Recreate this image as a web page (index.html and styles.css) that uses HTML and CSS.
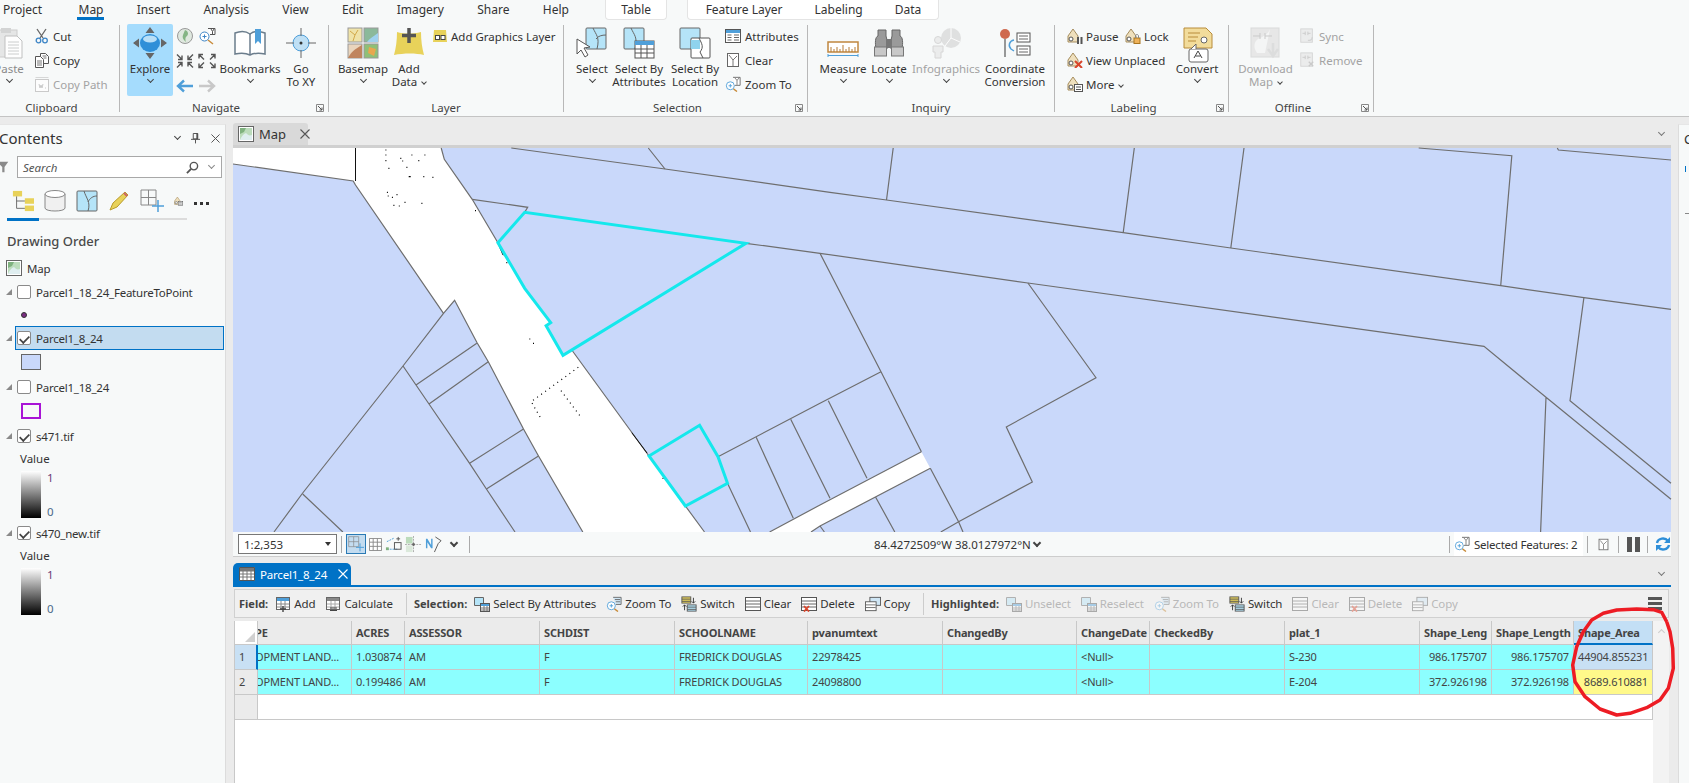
FILE: index.html
```html
<!DOCTYPE html>
<html lang="en">
<head>
<meta charset="utf-8">
<title>ArcGIS Pro</title>
<link rel="stylesheet" href="styles.css">
</head>
<body>
<svg class="sprite" xmlns="http://www.w3.org/2000/svg">
<symbol id="paste" viewBox="0 0 32 32"><rect x="2" y="3" width="22" height="27" fill="#e4e4e4" stroke="#c8c8c8"/><rect x="8" y="1" width="10" height="5" fill="#d0d0d0"/><path d="M12 9h12l5 5v17H12z" fill="#fff" stroke="#bbb"/><path d="M15 15h11M15 18h11M15 21h11M15 24h11M15 27h11" stroke="#c8c8c8"/></symbol>
<symbol id="cut" viewBox="0 0 16 16"><path d="M3 1l6 9M12 1L6 10" stroke="#666" stroke-width="1.300" fill="none"/><circle cx="4.500" cy="12.500" r="2.300" fill="none" stroke="#3d85c6" stroke-width="1.300"/><circle cx="11" cy="12.500" r="2.300" fill="none" stroke="#3d85c6" stroke-width="1.300"/></symbol>
<symbol id="copy" viewBox="0 0 16 16"><path d="M6.500 1.500h5l3 3v7h-8z" fill="#fff" stroke="#555"/><path d="M1.500 4.500h5l3 3v8h-8z" fill="#fff" stroke="#555"/><path d="M3 9h5M3 11h5M3 13h5M8.500 4h4M9.500 6h3" stroke="#777"/></symbol>
<symbol id="copypath" viewBox="0 0 16 16"><rect x="1.500" y="3.500" width="13" height="12" fill="#fff" stroke="#bbb"/><path d="M1.500 1.500h13" stroke="#ccc"/><path d="M5 8l1 4 1-3 1 3 1-4M11 12h1" stroke="#bbb" fill="none"/></symbol>
<symbol id="explore" viewBox="0 0 36 34"><path d="M18 1l-4.500 6h9zM18 33l-4.500-6h9zM1 17l6-4.500v9zM35 17l-6-4.500v9z" fill="#666"/><ellipse cx="18" cy="17" rx="10" ry="9" fill="#2f8fd8"/><ellipse cx="18" cy="13" rx="7" ry="3.500" fill="#b9dff7"/></symbol>
<symbol id="globe" viewBox="0 0 18 18"><circle cx="9" cy="9" r="7.500" fill="#dfe8df" stroke="#999"/><path d="M9 3c3 1 4 4 2 6-2 1-2 4-1 6-3-2-4-5-3-7z" fill="#85b585"/></symbol>
<symbol id="zoomsel" viewBox="0 0 18 18"><circle cx="6.500" cy="9.500" r="4.500" fill="#fff" stroke="#3d85c6"/><path d="M4.500 9.500h4M6.500 7.500v4" stroke="#3d85c6"/><path d="M10 13l5 4" stroke="#c88b3a" stroke-width="1.500"/><path d="M10 1.500h7v6h-5" fill="#fff" stroke="#555"/><path d="M13 2l1.500 2.500L16 2M14.500 4.500V7" stroke="#555" fill="none"/></symbol>
<symbol id="zin" viewBox="0 0 18 15"><path d="M1 1l5 5M6 2v4H2M17 1l-5 5M12 2v4h4M1 14l5-5M6 13V9H2M17 14l-5-5M12 13V9h4" stroke="#555" stroke-width="1.400" fill="none"/></symbol>
<symbol id="zout" viewBox="0 0 18 15"><path d="M6 6L1 1M1 5V1h4M12 6l5-5M17 5V1h-4M6 9l-5 5M1 10v4h4M12 9l5 5M17 10v4h-4" stroke="#555" stroke-width="1.400" fill="none"/></symbol>
<symbol id="back" viewBox="0 0 18 14"><path d="M17 7H3M8 1.500L2 7l6 5.500" stroke="#4f9fd9" stroke-width="2.400" fill="none"/></symbol>
<symbol id="fwd" viewBox="0 0 18 14"><path d="M1 7h14M10 1.500L16 7l-6 5.500" stroke="#c8c8c8" stroke-width="2.400" fill="none"/></symbol>
<symbol id="book" viewBox="0 0 32 30"><path d="M1 5c5-2 11-2 15 1 4-3 10-3 15-1v21c-5-1-11-1-15 1-4-2-10-2-15-1z" fill="#fff" stroke="#6b7d8c" stroke-width="1.500"/><path d="M16 6v21" stroke="#6b7d8c" stroke-width="1.500"/><path d="M21 1h6v15l-3-3-3 3z" fill="#4f9fd9"/></symbol>
<symbol id="goto" viewBox="0 0 32 32"><circle cx="16" cy="16" r="8" fill="#bfe0f5" stroke="#4f9fd9"/><circle cx="16" cy="16" r="1.500" fill="#333"/><path d="M16 1v8M16 23v8M1 16h8M23 16h8" stroke="#666"/></symbol>
<symbol id="basemap" viewBox="0 0 32 32"><rect x="1" y="1" width="14" height="14" fill="#efe3a8" stroke="#999"/><path d="M3 4l5 4 3-5M8 8l-2 6" stroke="#d2a94a" fill="none"/><rect x="17" y="1" width="14" height="14" fill="#8bb99a" stroke="#999"/><path d="M20 15c3-4 6-5 11-9v9z" fill="#9fd1ee"/><rect x="1" y="17" width="14" height="14" fill="#e9d5bd" stroke="#999"/><path d="M1 31c3-6 7-9 14-13v13z" fill="#c0845d"/><rect x="17" y="17" width="14" height="14" fill="#8fbf77" stroke="#999"/><path d="M22 20l7 2-2 7-6-3z" fill="#e8a74f"/></symbol>
<symbol id="adddata" viewBox="0 0 32 32"><path d="M4 5c7 2 16 2 24 0 0 8 1 16 3 23-8-2-20-2-30 0 2-7 3-15 3-23z" fill="#e8d25a"/><path d="M16 1v15M9 8.500h14" stroke="#555" stroke-width="3.500"/></symbol>
<symbol id="gfx" viewBox="0 0 16 16"><path d="M2 2h12l1 12H1z" fill="#e8d25a"/><rect x="3.500" y="7.500" width="4" height="4" fill="#fff" stroke="#444"/><rect x="9" y="7.500" width="4" height="4" fill="#fff" stroke="#444"/></symbol>
<symbol id="select" viewBox="0 0 32 32"><rect x="10" y="1" width="20" height="21" rx="1" fill="#b5e4f8" stroke="#666"/><path d="M17 1c3 7 7 9 4 21M30 8c-4 0-8 1-10 4" stroke="#666" fill="none"/><path d="M1 12l13 8-6 1 4 7-3 2-4-7-4 4z" fill="#fff" stroke="#555"/></symbol>
<symbol id="sbattr" viewBox="0 0 32 32"><rect x="1" y="1" width="20" height="21" rx="1" fill="#b5e4f8" stroke="#666"/><path d="M8 1c3 7 7 9 4 21" stroke="#666" fill="none"/><rect x="12" y="14" width="19" height="17" fill="#fff" stroke="#555"/><rect x="12" y="14" width="19" height="4" fill="#4f9fd9"/><path d="M12 22h19M12 26h19M18 18v13M24 18v13" stroke="#555"/></symbol>
<symbol id="sbloc" viewBox="0 0 32 32"><rect x="1" y="1" width="20" height="21" rx="1" fill="#b5e4f8" stroke="#666"/><rect x="12" y="11" width="19" height="20" rx="1" fill="#fff" stroke="#555"/><path d="M12 13h9v9h-9z" fill="#8fd3ee"/><path d="M20 11c3 6 5 9 1 14l3 6" stroke="#555" fill="none"/></symbol>
<symbol id="attr" viewBox="0 0 16 14"><rect x=".5" y=".5" width="15" height="13" fill="#fff" stroke="#555"/><rect x="1" y="1" width="14" height="3" fill="#4f9fd9"/><path d="M2.500 6h4M2.500 8.500h4M2.500 11h4M9 6h5M9 8.500h5M9 11h5" stroke="#666"/></symbol>
<symbol id="clear" viewBox="0 0 16 16"><rect x="2.500" y="1.500" width="11" height="13" fill="#fff" stroke="#666"/><path d="M4 3l4 5 4-4M8 8v6" stroke="#777" fill="none"/></symbol>
<symbol id="zoomto" viewBox="0 0 18 18"><circle cx="6" cy="11" r="4.500" fill="#fff" stroke="#4f9fd9"/><path d="M4 11h4M6 9v4" stroke="#4f9fd9"/><path d="M9.500 14.500l4 3" stroke="#c88b3a" stroke-width="1.500"/><path d="M9 1.500h8v9H11" fill="#fff" stroke="#666"/><path d="M11 2l2.500 3L16 2M13.500 5v5" stroke="#777" fill="none"/></symbol>
<symbol id="measure" viewBox="0 0 32 32"><rect x="1" y="15" width="30" height="10" fill="#fff" stroke="#c0873f" stroke-width="1.500"/><path d="M4 25v-5M7 25v-3M10 25v-5M13 25v-3M16 25v-7M19 25v-3M22 25v-5M25 25v-3M28 25v-5" stroke="#b57b34"/><path d="M1 28.500h30M1 27v3M31 27v3" stroke="#4f9fd9"/></symbol>
<symbol id="binoc" viewBox="0 0 32 32"><path d="M5 3h8v6l1 4v9H3C2 16 2 10 5 9zM19 3h8v6c3 1 3 7 2 13H18v-9l1-4z" fill="#9a9a9a" stroke="#666"/><path d="M13 12h6v9h-6z" fill="#777"/><rect x="1.500" y="20" width="12" height="9" fill="#c8c8c8" stroke="#777"/><rect x="18.500" y="20" width="12" height="9" fill="#c8c8c8" stroke="#777"/></symbol>
<symbol id="info" viewBox="0 0 32 32"><circle cx="21" cy="11" r="10" fill="#d8d8d8"/><path d="M21 11V1M21 11l9 4M21 11l-6 8" stroke="#fff"/><circle cx="8" cy="13" r="3.500" fill="#e8e8e8" stroke="#ccc"/><path d="M3 19h10v6h-2v6H5v-6H3z" fill="#e8e8e8" stroke="#ccc"/></symbol>
<symbol id="coord" viewBox="0 0 32 32"><circle cx="6" cy="7" r="5" fill="#cf6a4f"/><path d="M6 12v18" stroke="#777" stroke-width="1.500"/><rect x="18" y="6" width="13" height="9" fill="#fff" stroke="#555"/><rect x="18" y="19" width="13" height="9" fill="#fff" stroke="#555"/><path d="M20 9h9M20 12h9M20 22h9M20 25h9" stroke="#666"/><path d="M15 13c-5 1-6 6-3 9l3 2" stroke="#4f9fd9" stroke-width="1.500" fill="none"/></symbol>
<symbol id="lblpause" viewBox="0 0 16 16"><path d="M1 8l5-7 5 7v6H1z" fill="#efe0bd" stroke="#a58d5e"/><circle cx="4" cy="11" r="2" fill="#fff" stroke="#555"/><path d="M10 9h2v7h-2zM13.500 9h2v7h-2z" fill="#555"/></symbol>
<symbol id="lbllock" viewBox="0 0 16 16"><path d="M1 8l5-7 5 7v6H1z" fill="#efe0bd" stroke="#a58d5e"/><circle cx="4" cy="11" r="2" fill="#fff" stroke="#555"/><rect x="9" y="10" width="6" height="5.500" fill="#eeb25a" stroke="#a8741f"/><path d="M10.500 10V8c0-2 3-2 3 0v2" fill="none" stroke="#888"/></symbol>
<symbol id="lblx" viewBox="0 0 16 16"><path d="M1 8l5-7 5 7v6H1z" fill="#efe0bd" stroke="#a58d5e"/><circle cx="4" cy="11" r="2" fill="#fff" stroke="#555"/><path d="M8 9l7 7M15 9l-7 7" stroke="#d9452b" stroke-width="2"/></symbol>
<symbol id="lblmore" viewBox="0 0 16 16"><path d="M1 8l5-7 5 7v6H1z" fill="#efe0bd" stroke="#a58d5e"/><circle cx="4" cy="11" r="2" fill="#fff" stroke="#555"/><rect x="7.500" y="8.500" width="8" height="7" fill="#fff" stroke="#555"/><path d="M9 11h5M9 13.500h5" stroke="#555"/></symbol>
<symbol id="convert" viewBox="0 0 32 36"><path d="M3 1h22l6 6v14H3z" fill="#f2dc9b" stroke="#b88c3a"/><path d="M7 6h12M7 10h10M7 14h8" stroke="#b88c3a"/><circle cx="23" cy="13" r="3" fill="#fff" stroke="#666"/><rect x="8" y="22" width="19" height="13" rx="2" fill="#fff" stroke="#666"/><path d="M13 31l4-7 4 7M14.500 29h5" stroke="#444" fill="none"/><path d="M10 22l5-5v5" fill="#fff" stroke="#666"/></symbol>
<symbol id="dlmap" viewBox="0 0 32 32"><rect x="1" y="1" width="28" height="29" fill="#e2e2e2" stroke="#d0d0d0"/><path d="M20 2c-2 6-8 8-12 10-4 3-5 8-1 14h8" fill="#f4f4f4"/><path d="M3 9h7M15 9h7M10 6v6M15 6v6" stroke="#bbb"/><path d="M23 16v12M18 22l5 7 5-7" stroke="#d4d4d4" stroke-width="2.500" fill="none"/></symbol>
<symbol id="sync" viewBox="0 0 16 18"><rect x="1" y="1" width="13" height="15" fill="#e8e8e8" stroke="#c8c8c8"/><path d="M3 6h3M9 6h3M6 4v4M9 4v4" stroke="#bbb"/><path d="M9 14c3 0 5-1 5-4" stroke="#c8c8c8" stroke-width="1.500" fill="none"/></symbol>
<symbol id="remove" viewBox="0 0 16 18"><rect x="1" y="1" width="13" height="15" fill="#e8e8e8" stroke="#c8c8c8"/><path d="M3 6h3M9 6h3M6 4v4M9 4v4" stroke="#bbb"/><path d="M10 11l5 5M15 11l-5 5" stroke="#bbb" stroke-width="1.500"/></symbol>
<symbol id="launch" viewBox="0 0 8 8"><path d="M.5.500h7v7h-7z" fill="none" stroke="#888"/><path d="M2 2l4 4M6 3.500V6H3.500" stroke="#555" fill="none"/></symbol>
<symbol id="mapi" viewBox="0 0 16 16"><rect x=".5" y=".5" width="15" height="15" fill="#fff" stroke="#666"/><path d="M2 2h12v12H2z" fill="#bcdcbc"/><path d="M2 14c2-4 3-6 6-7 2 2 3 3 6 2v5z" fill="#dfeef0"/><path d="M2 2h6l-2 4-4 2z" fill="#7fb27f"/></symbol>
<symbol id="tree" viewBox="0 0 24 22"><rect x="1" y="0" width="10" height="6" fill="#e8d25a"/><rect x="14" y="8" width="10" height="6" fill="#e8d25a"/><rect x="14" y="16" width="10" height="6" fill="#e8d25a"/><path d="M5 6v13h9M5 11h9" stroke="#666" fill="none"/></symbol>
<symbol id="cyl" viewBox="0 0 22 22"><path d="M1 4v14c0 4 20 4 20 0V4" fill="#f0f0f0" stroke="#888"/><ellipse cx="11" cy="4" rx="10" ry="3.500" fill="#fff" stroke="#888"/></symbol>
<symbol id="mapt" viewBox="0 0 22 22"><rect x="1" y="1" width="20" height="20" rx="1" fill="#b5e4f8" stroke="#666"/><path d="M8 1c2 7 7 11 4 20M21 6c-4 0-7 2-9 6" stroke="#666" fill="none"/></symbol>
<symbol id="pencil" viewBox="0 0 22 22"><path d="M2 20l3-7L17 2l3 3L9 17z" fill="#e8d25a" stroke="#b99b2a"/><path d="M16 3l3 3" stroke="#c66" stroke-width="2"/></symbol>
<symbol id="gridplus" viewBox="0 0 24 24"><path d="M1 1h15v15H1zM8.500 1v15M1 8.500h15" fill="none" stroke="#888"/><path d="M18 11v12M12 17h12" stroke="#4f9fd9" stroke-width="1.500"/></symbol>
<symbol id="grid9" viewBox="0 0 14 14"><path d="M.5.500h13v13H.5zM.5 4.500h13M.5 9h13M4.500.500v13M9 .5v13" fill="#fff" stroke="#888"/></symbol>
<symbol id="tbl" viewBox="0 0 16 14"><path d="M.5.500h15v13H.5z" fill="#fff" stroke="#555"/><path d="M1 4h14M1 7h14M1 10h14M4 4v9M8 4v9M12 4v9" stroke="#777"/><rect x="1" y="1" width="14" height="3" fill="#777"/></symbol>
<symbol id="addf" viewBox="0 0 16 16"><rect x="1.500" y="1.500" width="13" height="12" fill="#fff" stroke="#666"/><rect x="2" y="2" width="12" height="3" fill="#4f9fd9"/><path d="M2 8h12M2 11h12M6 5v8M10 5v8" stroke="#888"/><path d="M8 10v6M5 13h6" stroke="#444" stroke-width="1.400"/></symbol>
<symbol id="calcf" viewBox="0 0 16 16"><rect x="1.500" y="1.500" width="13" height="12" fill="#fff" stroke="#666"/><rect x="2" y="2" width="12" height="3" fill="#888"/><path d="M2 8h12M2 11h12M6 5v8M10 5v8" stroke="#aaa"/><path d="M5 12h7M5 14.500h7" stroke="#444" stroke-width="1.200"/></symbol>
<symbol id="tsba" viewBox="0 0 16 16"><path d="M.5 1.500h9v8h-9z" fill="#b5e4f8" stroke="#666"/><rect x="6.500" y="7.500" width="9" height="8" fill="#fff" stroke="#555"/><rect x="7" y="8" width="8" height="2" fill="#4f9fd9"/><path d="M7 12h8M7 14h8M10 10v5M13 10v5" stroke="#777"/></symbol>
<symbol id="tzoom" viewBox="0 0 18 18"><circle cx="6" cy="11" r="4.500" fill="#fff" stroke="#4f9fd9"/><path d="M4 11h4M6 9v4" stroke="#4f9fd9"/><path d="M9.500 14.500l4 3" stroke="#c88b3a" stroke-width="1.500"/><path d="M8 1.500h9v8H11" fill="#cfe6f5" stroke="#666"/><path d="M10 4h6M11 6.500h5" stroke="#666"/></symbol>
<symbol id="tswitch" viewBox="0 0 18 18"><rect x="1" y="1" width="10" height="7" fill="#e8d25a" stroke="#555"/><path d="M1 3.500h10M1 6h10" stroke="#555"/><rect x="7" y="10" width="10" height="7" fill="#b5e4f8" stroke="#555"/><path d="M7 12.500h10M7 15h10" stroke="#555"/><path d="M14 2v6M12 6l2 2 2-2M4 16v-6M2 12l2-2 2 2" stroke="#333" fill="none"/></symbol>
<symbol id="tclear" viewBox="0 0 16 16"><rect x=".5" y="1.500" width="15" height="13" fill="#fff" stroke="#555"/><path d="M1 5h14M1 8h14M1 11h14" stroke="#666"/></symbol>
<symbol id="tdel" viewBox="0 0 16 16"><rect x=".5" y="1.500" width="15" height="13" fill="#fff" stroke="#555"/><path d="M1 5h14M1 8h14M1 11h14" stroke="#666"/><path d="M3 10l5 5.500M8 10l-5 5.500" stroke="#d9452b" stroke-width="1.800"/></symbol>
<symbol id="tcopy" viewBox="0 0 18 16"><rect x="5.500" y=".5" width="12" height="9" fill="#cfe6f5" stroke="#555"/><rect x=".5" y="5.500" width="12" height="10" fill="#fff" stroke="#555"/><path d="M1 9h11M1 12h11" stroke="#666"/></symbol>
<symbol id="snap" viewBox="0 0 18 18"><path d="M2 6l8-4M2 14h12" stroke="#4f9fd9" stroke-dasharray="2 1"/><rect x="1" y="12" width="3" height="3" fill="#7fb27f"/><rect x="10" y="7" width="7" height="7" fill="none" stroke="#555"/><path d="M14 1v4M12 3h4" stroke="#555"/></symbol>
<symbol id="correct" viewBox="0 0 18 18"><rect x="1" y="1" width="7" height="7" fill="#bcdcbc"/><rect x="1" y="10" width="7" height="7" fill="#dbe9db"/><path d="M0 9h18M9 0v18" stroke="#aaa" stroke-dasharray="2 1"/><circle cx="9" cy="9" r="1.500" fill="#666"/></symbol>
<symbol id="north" viewBox="0 0 18 18"><path d="M1 13V3h1.500l4 6.500V3H8v10H6.500l-4-6.500V13z" fill="#4f9fd9"/><path d="M11 1l6 4-3 3M14 8l-4 9" stroke="#555" fill="none"/></symbol>
<symbol id="mag" viewBox="0 0 14 14"><circle cx="8.500" cy="5.500" r="4" fill="none" stroke="#555" stroke-width="1.500"/><path d="M5.500 8.500L1 13" stroke="#555" stroke-width="2"/></symbol>
<symbol id="refresh" viewBox="0 0 16 16"><path d="M2 7c1-5 8-6 11-2M14 9c-1 5-8 6-11 2" stroke="#2f8fd8" stroke-width="2.400" fill="none"/><path d="M15 1v6h-6zM1 15V9h6z" fill="#2f8fd8"/></symbol>
<symbol id="filter" viewBox="0 0 12 16"><path d="M-4 1h15L6 8v7H3V8z" fill="#8a8a8a"/></symbol>
<symbol id="pin" viewBox="0 0 10 12"><path d="M2.500 1h5v6h-5zM0 7.500h10M5 8v4" stroke="#444" fill="none"/><path d="M6 1h1.500v6H6z" fill="#444"/></symbol>
<symbol id="xmark" viewBox="0 0 10 10"><path d="M.5.500l9 9M9.500.500l-9 9" stroke="currentColor" stroke-width="1.100" fill="none"/></symbol>
</svg>

<header class="tabs">
  <span class="tab first">Project</span>
  <span class="tab active">Map</span>
  <span class="tab">Insert</span>
  <span class="tab">Analysis</span>
  <span class="tab">View</span>
  <span class="tab">Edit</span>
  <span class="tab">Imagery</span>
  <span class="tab">Share</span>
  <span class="tab">Help</span>
  <div class="ctx ctx-table"><span class="tab">Table</span></div>
  <div class="ctx ctx-layer"><span class="tab">Feature Layer</span><span class="tab">Labeling</span><span class="tab">Data</span></div>
</header>

<section class="ribbon">
  <div class="group g-clip">
    <div class="gbody">
      <div class="lg w50 dim"><svg class="i32"><use href="#paste"/></svg><span>Paste</span><i class="chev"></i></div>
      <div class="smalls">
        <div class="sm"><svg class="i16"><use href="#cut"/></svg><span>Cut</span></div>
        <div class="sm"><svg class="i16"><use href="#copy"/></svg><span>Copy</span></div>
        <div class="sm off"><svg class="i16"><use href="#copypath"/></svg><span>Copy Path</span></div>
      </div>
    </div>
    <div class="gfoot"><span>Clipboard</span></div>
  </div>
  <div class="group g-nav">
    <div class="gbody">
      <div class="lg explore"><svg class="i36"><use href="#explore"/></svg><span>Explore</span><i class="chev"></i></div>
      <div class="navgrid">
        <svg class="nv"><use href="#globe"/></svg><svg class="nv"><use href="#zoomsel"/></svg>
        <svg class="nv"><use href="#zin"/></svg><svg class="nv"><use href="#zout"/></svg>
        <svg class="nv"><use href="#back"/></svg><svg class="nv"><use href="#fwd"/></svg>
      </div>
      <div class="lg w66 ml2"><svg class="i32"><use href="#book"/></svg><span>Bookmarks</span><i class="chev"></i></div>
      <div class="lg w38"><svg class="i32"><use href="#goto"/></svg><span>Go<br>To XY</span></div>
    </div>
    <div class="gfoot launcher"><span>Navigate</span><svg class="i8"><use href="#launch"/></svg></div>
  </div>
  <div class="group g-layer">
    <div class="gbody">
      <div class="lg w52"><svg class="i32"><use href="#basemap"/></svg><span>Basemap</span><i class="chev"></i></div>
      <div class="lg w40"><svg class="i32"><use href="#adddata"/></svg><span>Add<br>Data <i class="chev inl"></i></span></div>
      <div class="smalls ml3">
        <div class="sm"><svg class="i16"><use href="#gfx"/></svg><span>Add Graphics Layer</span></div>
      </div>
    </div>
    <div class="gfoot"><span>Layer</span></div>
  </div>
  <div class="group g-sel">
    <div class="gbody">
      <div class="lg w48"><svg class="i32"><use href="#select"/></svg><span>Select</span><i class="chev"></i></div>
      <div class="lg w46"><svg class="i32"><use href="#sbattr"/></svg><span>Select By<br>Attributes</span></div>
      <div class="lg w46 ml10"><svg class="i32"><use href="#sbloc"/></svg><span>Select By<br>Location</span></div>
      <div class="smalls ml7 wide">
        <div class="sm"><svg class="i16"><use href="#attr"/></svg><span>Attributes</span></div>
        <div class="sm"><svg class="i16"><use href="#clear"/></svg><span>Clear</span></div>
        <div class="sm"><svg class="i16"><use href="#zoomto"/></svg><span>Zoom To</span></div>
      </div>
    </div>
    <div class="gfoot launcher"><span>Selection</span><svg class="i8"><use href="#launch"/></svg></div>
  </div>
  <div class="group g-inq">
    <div class="gbody">
      <div class="lg w56"><svg class="i32"><use href="#measure"/></svg><span>Measure</span><i class="chev"></i></div>
      <div class="lg w36"><svg class="i32"><use href="#binoc"/></svg><span>Locate</span><i class="chev"></i></div>
      <div class="lg w78 off"><svg class="i32"><use href="#info"/></svg><span>Infographics</span><i class="chev"></i></div>
      <div class="lg w60"><svg class="i32"><use href="#coord"/></svg><span>Coordinate<br>Conversion</span></div>
    </div>
    <div class="gfoot"><span>Inquiry</span></div>
  </div>
  <div class="group g-lab">
    <div class="gbody">
      <div class="smalls w113">
        <div class="sm"><div class="pair"><svg class="i16"><use href="#lblpause"/></svg><span>Pause</span></div><div class="pair"><svg class="i16"><use href="#lbllock"/></svg><span>Lock</span></div></div>
        <div class="sm"><svg class="i16"><use href="#lblx"/></svg><span>View Unplaced</span></div>
        <div class="sm"><svg class="i16"><use href="#lblmore"/></svg><span>More <i class="chev inl"></i></span></div>
      </div>
      <div class="lg w34"><svg class="i32 tall"><use href="#convert"/></svg><span>Convert</span><i class="chev"></i></div>
    </div>
    <div class="gfoot launcher"><span>Labeling</span><svg class="i8"><use href="#launch"/></svg></div>
  </div>
  <div class="group g-off">
    <div class="gbody">
      <div class="lg w57 off"><svg class="i32"><use href="#dlmap"/></svg><span>Download<br>Map <i class="chev inl"></i></span></div>
      <div class="smalls ml5 wide off">
        <div class="sm"><svg class="i16"><use href="#sync"/></svg><span>Sync</span></div>
        <div class="sm"><svg class="i16"><use href="#remove"/></svg><span>Remove</span></div>
      </div>
    </div>
    <div class="gfoot launcher"><span>Offline</span><svg class="i8"><use href="#launch"/></svg></div>
  </div>
</section>

<main class="main">
  <aside class="contents">
    <div class="ct-head">
      <span class="ct-title">Contents</span>
      <i class="chev hd"></i>
      <svg class="pin"><use href="#pin"/></svg>
      <svg class="ct-x"><use href="#xmark"/></svg>
    </div>
    <div class="ct-search">
      <svg class="filter"><use href="#filter"/></svg>
      <div class="searchbox"><span>Search</span><svg class="mag"><use href="#mag"/></svg><i class="chev"></i></div>
    </div>
    <div class="ct-icons">
      <svg class="ic24"><use href="#tree"/></svg>
      <svg class="ic24"><use href="#cyl"/></svg>
      <svg class="ic24"><use href="#mapt"/></svg>
      <svg class="ic24"><use href="#pencil"/></svg>
      <svg class="ic24 big"><use href="#gridplus"/></svg>
      <svg class="ic-cut"><use href="#lblmore"/></svg>
      <div class="dots"><b></b><b></b><b></b></div>
    </div>
    <div class="ct-line"><i></i></div>
    <h2 class="ct-h">Drawing Order</h2>
    <div class="row row-map"><svg class="i16"><use href="#mapi"/></svg><span>Map</span></div>
    <div class="row"><b class="tri"></b><b class="cb"></b><span>Parcel1_18_24_FeatureToPoint</span></div>
    <div class="sw-row short"><b class="dot"></b></div>
    <div class="row sel"><b class="tri"></b><b class="cb on"></b><span>Parcel1_8_24</span></div>
    <div class="sw-row"><b class="sw fill"></b></div>
    <div class="row"><b class="tri"></b><b class="cb"></b><span>Parcel1_18_24</span></div>
    <div class="sw-row"><b class="sw hollow"></b></div>
    <div class="row"><b class="tri"></b><b class="cb on"></b><span>s471.tif</span></div>
    <div class="val">Value</div>
    <div class="ramp"><b class="grad"></b><div class="ramp-lab"><span>1</span><span>0</span></div></div>
    <div class="row"><b class="tri"></b><b class="cb on"></b><span>s470_new.tif</span></div>
    <div class="val">Value</div>
    <div class="ramp"><b class="grad"></b><div class="ramp-lab"><span>1</span><span>0</span></div></div>
  </aside>

  <div class="center">
    <div class="strip">
      <div class="maptab"><svg class="i16"><use href="#mapi"/></svg><span>Map</span><svg class="mx"><use href="#xmark"/></svg></div>
      <i class="chev strip-chev"></i>
    </div>
    <div class="mapview">
      <svg class="mapsvg" viewBox="233 148 1438 384" xmlns="http://www.w3.org/2000/svg">
        <rect x="233" y="148" width="1438" height="384" fill="#c9d8fa"/>
        <path d="M441.200 148L444.300 159.300 472.200 199.300 497.900 242.700 524.700 288.300 550.700 322.700 546.100 325.700 563 355.300 572.500 351 649 456 685.400 506 704.500 532H582.800L538.500 456 523.500 429 488.300 361.700 476.800 342.300 454.600 300.300 443.500 313.300 355.500 185 353.200 181 233 164V148z" fill="#fff"/>
        <path d="M921.400 451.700L930.300 468.300 820 526 811 532H769.600L820 505z" fill="#fff"/>
        <g class="ml">
          <path d="M233 164L353.200 181 355.500 185 443.500 313.300"/>
          <path d="M441.200 148L444.300 159.300 472.200 199.300 497.900 242.700"/>
          <path d="M472.200 199.300L527.700 207.300 524.700 212.300"/>
          <path d="M572.500 351L649 456M685.400 506L704.500 532"/>
          <path d="M274 532L302.700 493 403 366 443.500 313.300 454.600 300.300 476.800 342.300 488.300 361.700 523.500 429 538.500 456 582.800 532"/>
          <path d="M403 366L416 385 429 404 469.600 463.300 486.400 489 515 532"/>
          <path d="M476.800 343.300L416 385M488.300 361.700L429 404M523.500 429L469.600 463.300M538.500 456L486.400 489M302.700 494L342.900 532"/>
          <path d="M511.300 148L665 169 830 192.300 886.500 200 1123.200 232.700 1230.800 248 1500.700 285.700 1583.900 297.700 1671 309.300"/>
          <path d="M648.300 148L665 169M893.200 148L886.500 200M1134.300 148L1123.200 232.700M1244 148L1230.800 248"/>
          <path d="M1418.700 148L1511.800 155.700 1500.700 285.700M1557.300 148L1558.400 150 1671 160"/>
          <path d="M1583.900 297.700L1570 400.700 1671 483.300"/>
          <path d="M745.900 243.300L820 253.300 1027.900 283 1484 346.300 1546 397.300 1671 499.300M1546 397.300L1540.600 532"/>
          <path d="M1027.900 283L1096 377.700 1006.300 427 1032.300 482 958.600 521.700 940.800 532"/>
          <path d="M820 253.300L881 371.700 921.400 451.700M930.300 468.300L958.600 521.700 963 532"/>
          <path d="M881 371.700L820 403.300 718 456.700M727.500 483.300L750.500 532"/>
          <path d="M756.200 437.300L793.300 518.300M828.300 400.700L867 478.300M790.700 419.300L830 498.300"/>
          <path d="M921.400 451.700L820 505 769.600 532M930.300 468.300L820 526 811 532M875.400 496.700L894.800 532M820 526L824.400 532"/>
        </g>
        <path class="blk" d="M355.500 148V181"/>
        <path class="blk" d="M631.800 432.700L647 453M497.900 243L503 255"/>
        <path class="spk" d="M385.400 150h1M385.400 155h1M385.400 160.700h1M400.300 158.300h1M402.200 161h1M411.400 155h1M418.300 160.700h1M424.400 155h1M388.400 168.300h1M406.400 167.300h1M408.700 176.700h2M423.300 176.700h1M432.400 177.300h1M386.900 192.300h1M387.700 196h1M391.900 197.300h1M396.500 194.700h1M393.400 205.300h1M398.800 206h1M404.500 202.300h1M421.400 203.300h1M475 210.700h1M501 250.700h1M503.600 255h1M506.300 262.700h1M529.300 339h1M533 343.300h1M662.500 478.300h1"/>
        <path class="dotted" d="M578.300 367.300L531.200 401.700 540.800 418.300M561 390.700L581.300 417.700"/>
        <path class="cy" d="M497.900 242.700L524.700 212.300 745.900 243.300 563 355.300 546.100 325.700 550.700 322.700 524.700 288.300z"/>
        <path class="cy" d="M649 456L699.600 425.300 718 456.700 727.500 483.300 685.400 506z"/>
      </svg>
    </div>
    <div class="status">
      <div class="scale"><span>1:2,353</span><b class="caret"></b></div>
      <i class="vs"></i>
      <div class="st-sel"><svg class="i16"><use href="#gridplus"/></svg></div>
      <svg class="st-i w13"><use href="#grid9"/></svg>
      <svg class="st-i"><use href="#snap"/></svg>
      <svg class="st-i"><use href="#correct"/></svg>
      <svg class="st-i"><use href="#north"/></svg>
      <i class="chev dark"></i>
      <i class="vs"></i>
      <div class="coords"><span>84.4272509°W 38.0127972°N</span><i class="chev dark tight"></i></div>
      <i class="vs"></i>
      <div class="selected"><svg class="i16"><use href="#zoomto"/></svg><span>Selected Features: 2</span></div>
      <i class="vs"></i>
      <svg class="st-i w13 st-clear"><use href="#clear"/></svg>
      <i class="vs"></i>
      <div class="pause"><b></b><b></b></div>
      <i class="vs"></i>
      <svg class="st-i st-ref"><use href="#refresh"/></svg>
    </div>
    <div class="strip strip2">
      <div class="tabletab"><svg class="i16"><use href="#tbl"/></svg><span>Parcel1_8_24</span><svg class="mx w"><use href="#xmark"/></svg></div>
      <i class="chev strip-chev"></i>
    </div>
    <div class="panel">
      <div class="toolbar">
        <b class="tl">Field:</b>
        <div class="tb"><svg class="i16"><use href="#addf"/></svg><span>Add</span></div>
        <div class="tb"><svg class="i16"><use href="#calcf"/></svg><span>Calculate</span></div>
        <i class="tsep"></i>
        <b class="tl">Selection:</b>
        <div class="tb"><svg class="i16"><use href="#tsba"/></svg><span>Select By Attributes</span></div>
        <div class="tb"><svg class="i16"><use href="#tzoom"/></svg><span>Zoom To</span></div>
        <div class="tb"><svg class="i16"><use href="#tswitch"/></svg><span>Switch</span></div>
        <div class="tb"><svg class="i16"><use href="#tclear"/></svg><span>Clear</span></div>
        <div class="tb"><svg class="i16"><use href="#tdel"/></svg><span>Delete</span></div>
        <div class="tb"><svg class="i16"><use href="#tcopy"/></svg><span>Copy</span></div>
        <i class="tsep"></i>
        <b class="tl">Highlighted:</b>
        <div class="tb off"><svg class="i16"><use href="#tsba"/></svg><span>Unselect</span></div>
        <div class="tb off"><svg class="i16"><use href="#tsba"/></svg><span>Reselect</span></div>
        <div class="tb off"><svg class="i16"><use href="#tzoom"/></svg><span>Zoom To</span></div>
        <div class="tb"><svg class="i16"><use href="#tswitch"/></svg><span>Switch</span></div>
        <div class="tb off"><svg class="i16"><use href="#tclear"/></svg><span>Clear</span></div>
        <div class="tb off"><svg class="i16"><use href="#tdel"/></svg><span>Delete</span></div>
        <div class="tb off"><svg class="i16"><use href="#tcopy"/></svg><span>Copy</span></div>
        <div class="burger"><b></b><b></b><b></b></div>
      </div>
      <div class="tblwrap">
        <table class="grid">
          <colgroup>
            <col class="c23"><col class="c94"><col class="c53"><col class="c135"><col class="c135"><col class="c133"><col class="c135"><col class="c134"><col class="c73"><col class="c135"><col class="c135"><col class="c72"><col class="c82"><col class="c79">
          </colgroup>
          <thead>
            <tr><th class="corner"><b></b></th><th class="clip">PE</th><th>ACRES</th><th>ASSESSOR</th><th>SCHDIST</th><th>SCHOOLNAME</th><th>pvanumtext</th><th>ChangedBy</th><th>ChangeDate</th><th>CheckedBy</th><th>plat_1</th><th>Shape_Leng</th><th>Shape_Length</th><th class="sorted">Shape_Area</th></tr>
          </thead>
          <tbody>
            <tr class="hit"><th class="rh cur">1</th><td class="clip">OPMENT LAND...</td><td class="n">1.030874</td><td>AM</td><td>F</td><td>FREDRICK DOUGLAS</td><td>22978425</td><td></td><td>&lt;Null&gt;</td><td></td><td>S-230</td><td class="n">986.175707</td><td class="n">986.175707</td><td class="n blue">44904.855231</td></tr>
            <tr class="hit"><th class="rh">2</th><td class="clip">OPMENT LAND...</td><td class="n">0.199486</td><td>AM</td><td>F</td><td>FREDRICK DOUGLAS</td><td>24098800</td><td></td><td>&lt;Null&gt;</td><td></td><td>E-204</td><td class="n">372.926198</td><td class="n">372.926198</td><td class="n yellow">8689.610881</td></tr>
            <tr class="empty"><th class="rh"></th><td colspan="13"></td></tr>
          </tbody>
        </table>
        <div class="vscroll"><i class="chev up"></i></div>
      </div>
    </div>
  </div>

  <aside class="rightpane"><span class="rp-c">C</span><i class="rp-dot"></i><i class="rp-dash"></i></aside>
</main>

<svg class="redcircle" viewBox="1560 600 120 125" xmlns="http://www.w3.org/2000/svg">
  <path d="M1666.700 621.700L1661.700 612.300 1653.300 609.700 1636.700 609 1616.700 610 1603.300 613.300 1591.700 620 1583.300 631.700 1576.700 646.700 1572.700 665 1575 681.700 1585 696.700 1600 709 1616.700 715 1630 713.300 1646.700 707.700 1660 700 1668.300 688.300 1673.300 668.300 1672.700 648.300 1670 631.700 1666.700 621.700" fill="none" stroke="#ed1c24" stroke-width="3.500" stroke-linejoin="round"/>
</svg>
</body>
</html>
```

FILE: styles.css
```css
* { box-sizing: border-box; }
html, body { margin: 0; padding: 0; }
body {
  width: 1689px; height: 783px; overflow: hidden; position: relative;
  background: #ebebeb; color: #333;
  font: 11.5px/13px "Noto Sans", "Open Sans", sans-serif;
}
.sprite { display: none; }
i, b { font-style: normal; font-weight: normal; display: block; }
svg { display: block; flex: none; overflow: visible; }
.i16 { width: 16px; height: 16px; }
.i32 { width: 32px; height: 32px; }
.i36 { width: 36px; height: 34px; }
.i8 { width: 8px; height: 8px; flex: none; }
.chev { width: 5px; height: 5px; border-right: 1px solid #444; border-bottom: 1px solid #444; transform: rotate(45deg); }
.chev.inl { display: inline-block; width: 4px; height: 4px; margin: 0 0 2px 2px; }

/* tabs */
.tabs { height: 22px; background: #f7f9f9; display: flex; gap: 33.300px; padding-left: 3px; font-size: 12px; }
.tab { height: 20px; line-height: 19px; white-space: nowrap; position: relative; }
.tab.first { margin-right: 3px; }
.tab.active::after { content: ""; position: absolute; left: -2px; right: 0; top: 17px; height: 3px; background: #0072c6; }
.ctx { display: flex; gap: 32px; height: 20px; background: #fff; border: 1px solid #e4e4e4; border-top: 0; border-radius: 0 0 4px 4px; justify-content: center; }
.ctx-table { width: 62px; margin-left: 3px; }
.ctx-layer { width: 252px; margin-left: -13px; }

/* ribbon */
.ribbon { height: 95px; background: #f7f9f9; border-bottom: 1px solid #c4c4c4; display: flex; padding-top: 3px; margin-left: -16px; width: 1705px; }
.group { height: 87px; display: flex; flex-direction: column; border-right: 1px solid #b8b8b8; }
.g-clip { width: 136px; }
.g-nav { width: 209px; }
.g-layer { width: 235px; }
.g-sel { width: 244px; }
.g-inq { width: 247px; }
.g-lab { width: 174px; }
.g-off { width: 145px; }
.gbody { height: 75px; display: flex; align-items: flex-start; }
.g-nav .gbody { padding-left: 7px; }
.g-layer .gbody { padding-left: 8px; }
.g-sel .gbody { padding-left: 4px; }
.g-inq .gbody { padding-left: 7px; }
.g-lab .gbody { padding-left: 12px; }
.g-off .gbody { padding-left: 8px; }
.gfoot { height: 16px; line-height: 14px; margin-bottom: -4px; margin-top: auto; display: flex; align-items: center; color: #444; flex: none; }
.gfoot span { flex: 1; text-align: center; }
.gfoot.launcher { padding-right: 4px; }
.gfoot.launcher span { margin-right: 4px; }
.lg { flex: none; display: flex; flex-direction: column; align-items: center; white-space: nowrap; text-align: center; padding-top: 2px; }
.lg > svg { margin-bottom: 3px; }
.lg .chev { margin-top: 2px; }
.lg > span { line-height: 13px; }
.lg .i32.tall { height: 36px; margin-bottom: -1px; }
.w34 { width: 34px; } .w36 { width: 36px; } .w38 { width: 38px; } .w40 { width: 40px; }
.w46 { width: 46px; } .w48 { width: 48px; } .w50 { width: 50px; } .w52 { width: 52px; }
.w56 { width: 56px; } .w57 { width: 57px; } .w60 { width: 60px; } .w66 { width: 64px; } .w78 { width: 78px; }
.ml2 { margin-left: 2px; } .ml3 { margin-left: 3px; } .ml5 { margin-left: 5px; } .ml7 { margin-left: 7px; } .ml10 { margin-left: 10px; }
.dim { color: #8a8a8a; } .dim svg { opacity: .9; }
.explore { width: 46px; height: 72px; margin-top: -1px; background: #a5dcfd; border-radius: 2px; padding-top: 2px; }
.explore > svg { margin-bottom: 2px; }
.navgrid { width: 40px; margin-left: 3px; margin-top: 2px; display: grid; grid-template-columns: 18px 18px; column-gap: 4px; row-gap: 7px; }
.nv { width: 18px; height: 18px; }
.smalls { flex: none; display: flex; flex-direction: column; margin-top: -1px; }
.w113 { width: 113px; }
.sm { height: 24px; display: flex; align-items: center; gap: 3px; white-space: nowrap; }
.wide .sm { gap: 4px; }
.pair { display: flex; align-items: center; gap: 3px; width: 58px; }
.off { color: #a3a3a3; }
.off svg { opacity: .75; }

/* main */
.main { display: flex; height: 666px; }
.contents { flex: none; width: 226px; margin-top: 7px; background: #f7f9f9; border-right: 1px solid #dcdcdc; border-top: 1px solid #e6e6e6; overflow: hidden; }
.ct-head { height: 31px; display: flex; align-items: center; padding-bottom: 5px; }
.ct-title { font-size: 15px; line-height: 20px; margin-left: -1px; color: #333; width: 176px; }
.chev.hd { margin-top: -3px; }
.pin { width: 9px; height: 12px; margin-left: 11px; }
.ct-x { width: 9px; height: 9px; margin-left: 11px; color: #555; }
.ct-search { height: 22px; display: flex; align-items: center; }
.filter { width: 9px; height: 16px; margin-right: 8px; }
.searchbox { width: 205px; height: 22px; background: #fff; border: 1px solid #a8a8a8; display: flex; align-items: center; padding: 0 7px 0 5px; }
.searchbox span { flex: 1; font-style: italic; color: #555; }
.mag { width: 13px; height: 13px; margin-right: 10px; }
.searchbox .chev { margin-top: -3px; border-color: #888; }
.ct-icons { height: 34px; display: flex; align-items: center; padding: 11px 0 0 12px; gap: 10px; }
.ic24 { width: 22px; height: 22px; }
.ic24.big { width: 24px; height: 24px; }
.ic-cut { width: 9px; height: 18px; overflow: hidden; }
.dots { display: flex; gap: 3px; margin-left: 1px; margin-top: 6px; }
.dots b { width: 3px; height: 3px; background: #333; }
.ct-line { margin-top: 7px; width: 180px; height: 2px; background: #dcdcdc; margin-left: 7px; }
.ct-line i { width: 32px; height: 3px; margin-top: -1px; background: #0072c6; }
.ct-h { margin: 11px 0 0 7px; height: 24px; font-size: 13px; line-height: 20px; font-weight: 500; color: #4a4a4a; }
.row { height: 24px; display: flex; align-items: center; margin-right: 1px; position: relative; white-space: nowrap; }
.row > span { letter-spacing: -.23px; }
.row-map { padding-left: 6px; gap: 5px; margin-top: 1px; }
.tri { width: 0; height: 0; margin: 0 5px 0 6px; border-left: 6px solid transparent; border-bottom: 6px solid #8a8a8a; }
.cb { width: 14px; height: 14px; border: 1px solid #8a8a8a; border-radius: 2px; background: #fff; margin-right: 5px; position: relative; }
.cb.on::after { content: ""; position: absolute; left: 3px; top: 1px; width: 5px; height: 9px; border-right: 2px solid #444; border-bottom: 2px solid #444; transform: rotate(45deg) scale(.85); }
.row.sel { background: #c3dcf0; box-shadow: inset 0 0 0 1px #0072c6; margin-left: 15px; margin-right: 1px; }
.row.sel .tri { margin-left: -9px; margin-right: 5px; }
.sw-row { height: 25px; padding: 4px 0 0 21px; }
.sw-row.short { height: 22px; padding: 8px 0 0 21px; }
.dot { width: 6px; height: 6px; border-radius: 50%; background: #7a2c82; border: 1px solid #333; }
.sw { width: 20px; height: 16px; }
.sw.fill { background: #c9d8fa; border: 1px solid #666; }
.sw.hollow { background: transparent; border: 2px solid #a814d6; }
.val { height: 22px; line-height: 22px; padding-left: 20px; }
.ramp { height: 51px; display: flex; padding: 1px 0 0 21px; flex: none; }
.grad { width: 20px; height: 47px; background: linear-gradient(#fff, #000); }
.ramp-lab { height: 47px; margin-left: 6px; display: flex; flex-direction: column; justify-content: space-between; color: #6b3a78; }
.ramp-lab span:last-child { color: #4a6a8a; }

.center { flex: none; width: 1438px; margin-left: 7px; display: flex; flex-direction: column; }
.strip { height: 22px; margin-top: 6px; display: flex; justify-content: space-between; align-items: center; position: relative; flex: none; }
.strip-chev { border-color: #777; margin-right: 7px; margin-top: -3px; }
.maptab { width: 75px; height: 22px; background: #d9d9d9; border-radius: 3px 3px 0 0; display: flex; align-items: center; padding-left: 5px; gap: 5px; font-size: 13px; }
.mx { width: 10px; height: 10px; margin-left: 9px; color: #555; }
.mapview { height: 387px; flex: none; border-top: 3px solid #d0d0d0; }
.mapsvg { width: 1438px; height: 384px; }
.ml { fill: none; stroke: #6e6e6e; stroke-width: 1.200; }
.blk { fill: none; stroke: #111; stroke-width: 1; }
.spk { fill: none; stroke: #000; stroke-width: 1.200; }
.dotted { fill: none; stroke: #000; stroke-width: 1.200; stroke-dasharray: 1 4; }
.cy { fill: none; stroke: #14e8ec; stroke-width: 3; stroke-linejoin: miter; }

.status { height: 25px; flex: none; background: #f7f9f9; border-bottom: 1px solid #cdcdcd; display: flex; align-items: center; padding-left: 5px; }
.scale { width: 99px; height: 20px; background: #fff; border: 1px solid #777; display: flex; align-items: center; justify-content: space-between; padding: 0 5px; }
.caret { width: 0; height: 0; border: 3px solid transparent; border-top: 4px solid #333; border-bottom: 0; }
.vs { width: 1px; height: 17px; background: #aaa; margin: 0 4px; flex: none; }
.st-sel { width: 20px; height: 20px; background: #c3dcf0; border: 1px solid #2a7ab5; display: flex; align-items: center; justify-content: center; }
.st-i { width: 17px; height: 17px; margin-left: 3px; }
.st-i.w13 { width: 13px; height: 13px; }
.st-clear { margin-left: 5px; margin-right: 4px; }
.st-i.st-ref { width: 16px; height: 16px; }
.chev.dark { border-right: 2px solid #444; border-bottom: 2px solid #444; margin: -3px 8px 0 9px; width: 6px; height: 6px; }
.chev.dark.tight { margin-left: 3px; }
.coords { margin-left: 400px; width: 571px; display: flex; align-items: center; gap: 0; }
.selected { width: 129px; height: 24px; background: #fff; display: flex; align-items: center; gap: 4px; white-space: nowrap; letter-spacing: -.22px; overflow: hidden; }
.pause { display: flex; gap: 3px; margin: 0 3px 0 4px; }
.pause b { width: 5px; height: 15px; background: #555; }

.strip2 { margin-top: 6px; }
.tabletab { width: 118px; height: 22px; background: #0072c6; color: #fff; border-radius: 5px 5px 0 0; display: flex; align-items: center; padding-left: 6px; gap: 5px; white-space: nowrap; }
.tabletab span { letter-spacing: -.2px; }
.mx.w { color: #fff; margin-left: 6px; }
.panel { flex: 1; border-top: 2px solid #0072c6; padding: 2px 2px 0 1px; min-height: 0; display: flex; flex-direction: column; }
.toolbar { height: 29px; flex: none; background: #f0f0f0; border: 1px solid #d0d0d0; display: flex; align-items: center; padding-left: 4px; gap: 10px; white-space: nowrap; position: relative; }
.tl { font-weight: 700; font-size: 11px; color: #444; margin-right: -3px; }
.tb { display: flex; align-items: center; gap: 3px; }
.tb span { letter-spacing: -.1px; }
.tb.off span { color: #b8b8b8; }
.tb.off svg { opacity: .45; }
.tsep { width: 1px; height: 22px; background: #ccc; margin-right: -3px; margin-left: 3px; }
.burger { position: absolute; left: 1413px; top: 7px; width: 14px; display: grid; gap: 2px; }
.burger b { height: 3px; background: #555; }
.tblwrap { margin-top: 3px; flex: 1; display: flex; background: #fff; border-left: 1px solid #c8c8c8; min-height: 0; }
.grid { width: 1418px; table-layout: fixed; border-collapse: separate; border-spacing: 0; font-size: 11px; letter-spacing: -.15px; flex: none; height: 99px; }
.c23 { width: 23px; } .c94 { width: 94px; } .c53 { width: 53px; } .c135 { width: 135px; } .c133 { width: 133px; } .c134 { width: 134px; } .c73 { width: 73px; } .c72 { width: 72px; } .c82 { width: 82px; } .c79 { width: 79px; }
.grid thead th { height: 24px; background: #ebebeb; text-align: left; font-weight: 700; font-size: 11px; color: #444; padding: 0 0 0 4px; white-space: nowrap; overflow: hidden; border-right: 1px solid #c8c8c8; border-bottom: 1px solid #c8c8c8; }
.grid td { height: 25px; padding: 0 4px 2px; border-right: 1px solid #c8c8c8; border-bottom: 1px solid #c8c8c8; white-space: nowrap; overflow: hidden; color: #444; }
.hit td { background: #8cffff; }
.grid td.n { text-align: right; padding-right: 4px; }
.grid .clip { padding-left: 0; text-indent: -3px; }
.grid th.corner { background: #fff; position: relative; }
.corner b { position: absolute; right: 2px; bottom: 2px; width: 0; height: 0; border-left: 10px solid transparent; border-bottom: 10px solid #d0d0d0; }
.grid thead th.sorted { background: #c3dff5; border-bottom: 2px solid #0072c6; }
.rh { background: #ebebeb; font-weight: 400; text-align: left; padding: 0 0 2px 4px; border-right: 1px solid #c8c8c8; border-bottom: 1px solid #c8c8c8; color: #444; }
.rh.cur { background: #c8e0f4; border-right: 2px solid #0072c6; }
.grid td.blue { background: #c8e0f4; }
.grid td.yellow { background: #fff98a; }
.empty td { background: #fff; }
.vscroll { flex: 1; background: #f3f3f3; padding-top: 9px; }
.chev.up { transform: rotate(225deg); margin: 0 auto; border-color: #ccc; }

.rightpane { flex: 1; margin: 7px 0 0 7px; background: #f7f9f9; border-left: 1px solid #dcdcdc; border-top: 1px solid #e6e6e6; position: relative; overflow: hidden; padding: 8px 0 0 5px; font-size: 13px; }
.rp-c { display: block; }
.rp-dot { width: 1px; height: 6px; background: #0072c6; margin: 20px 0 0 1px; }
.rp-dash { width: 10px; height: 1px; background: #888; margin: 41px 0 0 1px; }

.redcircle { position: absolute; left: 1560px; top: 600px; width: 120px; height: 125px; pointer-events: none; }
```
